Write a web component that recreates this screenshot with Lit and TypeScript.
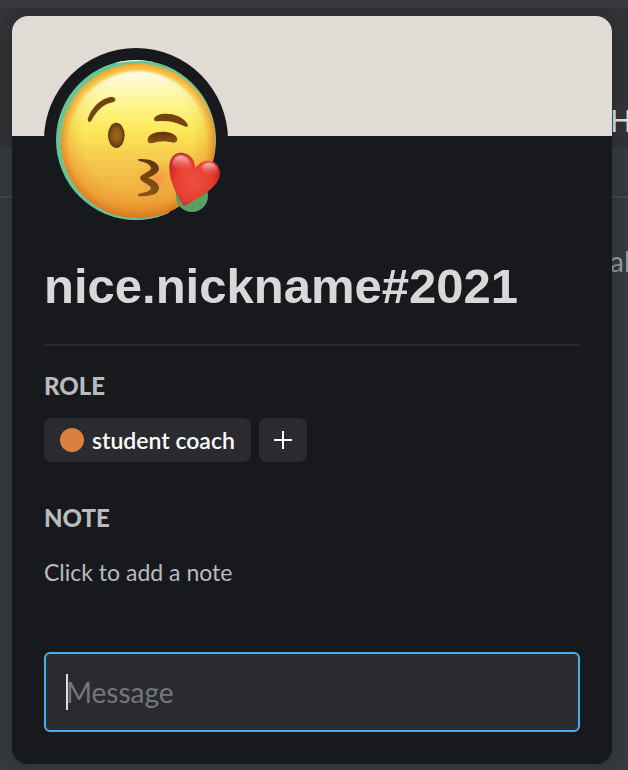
import { LitElement, html, css, svg } from "lit";
import { customElement, property } from "lit/decorators.js";

@customElement("kiss-avatar")
class KissAvatar extends LitElement {
  static styles = css`
    :host { display: block; width: 184px; height: 184px; }
    .picture { display: block; width: 100%; height: 100%; overflow: visible; }
  `;

  render() {
    return html`<svg class="picture" viewBox="12 24 552 552" role="img" aria-label="Avatar, online">
      ${svg`
      <defs>
        <linearGradient id="face" x1="0" y1="0" x2="0" y2="1">
          <stop offset="0" stop-color="#fbdb4c"/>
          <stop offset=".2" stop-color="#fdf270"/>
          <stop offset=".42" stop-color="#fbe755"/>
          <stop offset=".66" stop-color="#f5c44a"/>
          <stop offset=".88" stop-color="#efaa3c"/>
          <stop offset="1" stop-color="#dd8c2c"/>
        </linearGradient>
        <radialGradient id="rim" cx=".5" cy=".48" r=".52">
          <stop offset=".68" stop-color="#e88a25" stop-opacity="0"/>
          <stop offset=".86" stop-color="#e98d28" stop-opacity=".34"/>
          <stop offset="1" stop-color="#d97520" stop-opacity=".95"/>
        </radialGradient>
        <linearGradient id="top" x1="0" y1="0" x2="0" y2="1">
          <stop offset="0" stop-color="#fffdf0"/>
          <stop offset=".14" stop-color="#fffbc8" stop-opacity=".8"/>
          <stop offset=".5" stop-color="#fdf15c" stop-opacity=".15"/>
          <stop offset=".6" stop-color="#fdf15c" stop-opacity="0"/>
        </linearGradient>
        <radialGradient id="eye"><stop offset="0" stop-color="#a06818"/><stop offset=".55" stop-color="#8b5616"/><stop offset="1" stop-color="#61330c"/></radialGradient>
        <radialGradient id="blush"><stop offset="0" stop-color="#f77942" stop-opacity=".55"/><stop offset="1" stop-color="#f58b42" stop-opacity="0"/></radialGradient>
        <linearGradient id="brown" x1="0" y1="0" x2="0" y2="1"><stop offset="0" stop-color="#623309"/><stop offset="1" stop-color="#8c5518"/></linearGradient>
        <radialGradient id="heart" cx=".47" cy=".55" r=".6"><stop offset="0" stop-color="#ee5140"/><stop offset=".6" stop-color="#e63d30"/><stop offset="1" stop-color="#bd1c1b"/></radialGradient>
        <linearGradient id="shine" x1="0" y1="0" x2="0" y2="1"><stop offset="0" stop-color="#ffdcd9" stop-opacity=".95"/><stop offset="1" stop-color="#f2605a" stop-opacity="0"/></linearGradient>
        <filter id="soft" x="-30%" y="-30%" width="160%" height="160%"><feGaussianBlur stdDeviation="3"/></filter>
        <clipPath id="disc"><circle cx="288" cy="300" r="240"/></clipPath>
      </defs>
      <circle cx="288" cy="300" r="276" fill="#18191c"/>
      <circle cx="288" cy="300" r="240" fill="#66c596"/>
      <path clip-path="url(#disc)" d="M225 58H352V66Q290 58 225 69Z" fill="#fff"/>
      <circle cx="456" cy="468" r="84" fill="#18191c"/>
      <circle cx="294" cy="303" r="232" fill="url(#face)"/>
      <circle cx="294" cy="303" r="232" fill="url(#rim)"/>
      <ellipse cx="294" cy="294" rx="204" ry="200" fill="url(#top)" filter="url(#soft)"/>
      <ellipse cx="352" cy="416" rx="60" ry="55" fill="url(#blush)"/>
      <g fill="none" stroke="#fff34d" stroke-opacity=".4" stroke-width="18" stroke-linecap="round" filter="url(#soft)">
        <path d="M149 240Q170 193 220 180M347 238Q392 218 438 256"/>
      </g>
      <path d="M143 240C149 212 179 174 214 171Q227 171 226 181Q224 187 213 188C189 192 166 217 154 243Q145 250 143 240Z" fill="#754310"/>
      <path d="M342 238C346 214 421 214 443 253Q446 264 433 259C406 245 379 240 351 244Q342 245 342 238Z" fill="#754310"/>
      <ellipse cx="229" cy="286" rx="25" ry="38" fill="url(#eye)"/>
      <path d="M323 300C323 267 410 268 412 298C411 310 400 309 390 306Q367 300 341 308C329 312 323 309 323 300Z" fill="url(#brown)"/>
      <path d="M296 357C324 355 356 363 357 386C356 401 335 408 324 414C341 420 357 430 357 446C354 467 318 469 297 469Q291 466 297 461C314 459 333 453 333 445C333 434 300 425 300 414C301 403 333 395 333 385C332 373 315 366 297 363Q292 359 296 357Z" fill="url(#brown)"/>
      <circle cx="456" cy="468" r="48" fill="#57a262"/>
      <path d="M432 498C412 468 389 426 388 386C386 348 412 331 437 341C458 349 464 364 466 383C480 366 500 356 521 366C543 378 546 409 529 430C510 455 466 482 432 498Z" fill="url(#heart)"/>
      <path d="M396 375C397 335 449 336 454 380C437 399 412 399 396 375Z" fill="url(#shine)" filter="url(#soft)"/>
      <path d="M484 380C502 354 538 369 532 404C516 412 495 406 484 380Z" fill="url(#shine)" filter="url(#soft)"/>
      `}
    </svg>`;
  }
}

@customElement("role-chip")
class RoleChip extends LitElement {
  @property() color = "#d9823f";

  static styles = css`
    :host { display: flex; align-items: center; gap: 8px; height: 44px; padding: 0 16px; box-sizing: border-box; border-radius: 8px; background: #2a2b2e; color: #fff; font-size: 23px; line-height: 24px; font-weight: 600; white-space: nowrap; }
    .dot { width: 24px; height: 24px; border-radius: 50%; }
  `;

  render() {
    return html`<span class="dot" style="background:${this.color}"></span><slot></slot>`;
  }
}

@customElement("app-root")
class AppRoot extends LitElement {
  static styles = css`
    :host { display: grid; min-height: 100vh; overflow: hidden; background: #36393e; font-family: Lato, "Open Sans", sans-serif; }
    * { box-sizing: border-box; }
    .chat, .card { grid-area: 1 / 1; min-width: 0; }
    .chat { padding-top: 8px; overflow: hidden; }
    .message { height: 140px; padding-top: 90px; background: #323237; color: #dcddde; }
    .divider { height: 50px; border-bottom: 2px solid #45474d; }
    .reply { padding-top: 40px; color: #96989d; }
    .peek { display: block; width: 18px; margin-left: auto; line-height: 46px; font-size: 28px; white-space: nowrap; }
    .message .peek { font-family: "Noto Sans", sans-serif; font-size: 30px; }
    .card { position: relative; align-self: start; margin: 16px 16px 6px 12px; border-radius: 16px; background: #18191c; box-shadow: 0 0 16px rgba(0, 0, 0, .2); overflow: hidden; }
    .banner { height: 120px; background: #e0dbd5; }
    .body { padding: 0 32px 32px; }
    .avatar { margin-top: -88px; }
    .name { margin: 24px 0 28px; font: bold 49px/60px "Liberation Sans", sans-serif; color: #d8d8d8; white-space: nowrap; }
    .rule { height: 2px; margin: 0; border: 0; background: #292a2d; }
    .heading { margin: 28px 0 20px; font-size: 24px; line-height: 24px; font-weight: 900; color: #b9bbbe; }
    .roles { display: flex; gap: 8px; margin-bottom: 44px; }
    .add { display: grid; place-items: center; width: 48px; height: 44px; padding: 0; border: 0; border-radius: 8px; background: #2a2b2e; }
    .plus { display: block; width: 20px; height: 20px; }
    .note { display: block; margin: 26px 0 64px; padding: 0; border: 0; background: none; font: inherit; font-size: 23px; line-height: 32px; color: #b9bbbe; }
    .field { position: relative; display: block; }
    .input { display: block; width: 100%; height: 80px; padding: 0 20px; border: 2px solid #47acf0; border-radius: 6px; outline: none; background: #2a2b2e; color: #dcddde; font: inherit; font-size: 28px; }
    .input::placeholder { color: #74767d; opacity: 1; }
    .caret { position: absolute; left: 22px; top: 22px; width: 2px; height: 36px; background: #dcddde; }
    .input:focus + .caret { display: none; }
  `;

  render() {
    return html`
      <div class="chat">
        <div class="message"><span class="peek">H</span></div>
        <div class="divider"></div>
        <div class="reply"><span class="peek">al</span></div>
      </div>
      <section class="card">
        <div class="banner"></div>
        <div class="body">
          <kiss-avatar class="avatar"></kiss-avatar>
          <h1 class="name">nice.nickname#2021</h1>
          <hr class="rule">
          <h2 class="heading">ROLE</h2>
          <div class="roles">
            <role-chip>student coach</role-chip>
            <button class="add" aria-label="Add role">
              <svg class="plus" viewBox="0 0 20 20"><path d="M10 1V19M1 10H19" stroke="#fff" stroke-width="2"/></svg>
            </button>
          </div>
          <h2 class="heading">NOTE</h2>
          <button class="note">Click to add a note</button>
          <div class="field">
            <input class="input" type="text" placeholder="Message" aria-label="Message">
            <span class="caret"></span>
          </div>
        </div>
      </section>
    `;
  }
}
